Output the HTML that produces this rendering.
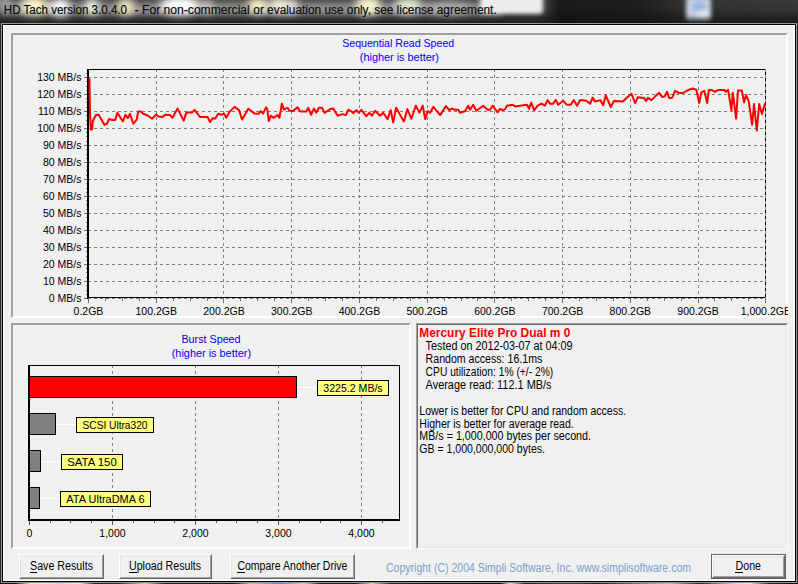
<!DOCTYPE html>
<html><head><meta charset="utf-8"><style>
html,body{margin:0;padding:0;}
body{width:798px;height:584px;overflow:hidden;position:relative;background:#1e1e1e;font-family:'Liberation Sans', sans-serif;}
svg text{font-family:'Liberation Sans', sans-serif;}
.t{font-size:10.5px;fill:#000;}
.b{fill:#0000ff;font-size:10.8px}
.m{font-size:12px;fill:#000;}
.lb{font-size:11px;fill:#000;}
.cp{fill:#7c9fcc;}
.bold{font-size:12px;font-weight:bold;fill:#ff0000;}
</style></head><body>
<svg width="798" height="23" style="position:absolute;left:0;top:0">
<defs>
<filter id="bl" x="-50%" y="-50%" width="200%" height="200%"><feGaussianBlur stdDeviation="4"/></filter>
<filter id="bl3" x="-50%" y="-50%" width="200%" height="200%"><feGaussianBlur stdDeviation="2.2"/></filter>
<filter id="bl2" x="-20%" y="-100%" width="140%" height="300%"><feGaussianBlur stdDeviation="3"/></filter>
<linearGradient id="tbv" x1="0" y1="0" x2="0" y2="1">
<stop offset="0" stop-color="#444"/><stop offset="0.45" stop-color="#3e3e3e"/><stop offset="0.8" stop-color="#2a2a2a"/><stop offset="1" stop-color="#222"/>
</linearGradient>
<linearGradient id="tbh" x1="0" y1="0" x2="1" y2="0">
<stop offset="0" stop-color="#000" stop-opacity="0"/>
<stop offset="0.68" stop-color="#000" stop-opacity="0"/>
<stop offset="0.70" stop-color="#000" stop-opacity="0.6"/>
<stop offset="0.80" stop-color="#000" stop-opacity="0.55"/>
<stop offset="0.86" stop-color="#000" stop-opacity="0.25"/>
<stop offset="1" stop-color="#000" stop-opacity="0.15"/>
</linearGradient>
</defs>
<rect width="798" height="23" fill="url(#tbv)"/>
<rect width="798" height="23" fill="url(#tbh)"/>
<rect x="0" y="3" width="502" height="13" fill="#fff" opacity="0.42" filter="url(#bl2)"/>
<g filter="url(#bl)"><ellipse cx="4" cy="2" rx="8" ry="5" fill="#c0c0c0" opacity="0.9"/><ellipse cx="34" cy="6" rx="14" ry="10" fill="#fbf3c8" opacity="1"/><ellipse cx="60" cy="8" rx="10" ry="10" fill="#ffffff" opacity="1"/><ellipse cx="92" cy="7" rx="7" ry="9" fill="#f4f4ec" opacity="1"/><ellipse cx="126" cy="7" rx="8" ry="9" fill="#f4ecc0" opacity="1"/><ellipse cx="180" cy="6" rx="20" ry="10" fill="#ffffff" opacity="1"/><ellipse cx="207" cy="7" rx="5" ry="8" fill="#e0e0e0" opacity="0.9"/><ellipse cx="258" cy="6" rx="10" ry="9" fill="#faf2c8" opacity="1"/><ellipse cx="290" cy="7" rx="8" ry="8" fill="#f0f0e8" opacity="1"/><ellipse cx="368" cy="6" rx="13" ry="10" fill="#faf6d0" opacity="1"/><ellipse cx="408" cy="6" rx="14" ry="9" fill="#e0e8d0" opacity="1"/><ellipse cx="448" cy="9" rx="22" ry="7" fill="#b8b8b8" opacity="0.8"/><ellipse cx="278" cy="6" rx="8" ry="9" fill="#f8f4d8" opacity="1"/></g><g filter="url(#bl3)"><rect x="480" y="-4" width="63" height="18" rx="4" fill="#eeeeee"/><rect x="686" y="-3" width="25" height="23" rx="3" fill="#c8d4e4"/><ellipse cx="699" cy="7" rx="7" ry="6" fill="#9ab8e0"/><ellipse cx="703" cy="15" rx="7" ry="4" fill="#eef0f4"/></g>
<rect x="0" y="18" width="798" height="5" fill="#202020" opacity="0.55" filter="url(#bl2)"/>
</svg>
<svg width="798" height="23" style="position:absolute;left:0;top:0"><g style="font-family:'Liberation Sans',sans-serif;font-size:12px;fill:#0a0a0a;stroke:#0a0a0a;stroke-width:0.2px"><text x="3.8" y="14" textLength="123.2" lengthAdjust="spacingAndGlyphs">HD Tach version 3.0.4.0</text><text x="134.6" y="14" textLength="115.2" lengthAdjust="spacingAndGlyphs">- For non-commercial</text><text x="253.3" y="14" textLength="243.4" lengthAdjust="spacingAndGlyphs">or evaluation use only, see license agreement.</text></g></svg>
<div style="position:absolute;left:0px;top:23px;width:798px;height:561px;background:#2a2a2a"></div>
<div style="position:absolute;left:1px;top:23px;width:796px;height:560px;background:#969696"></div>
<div style="position:absolute;left:2px;top:24px;width:794px;height:558px;background:#000"></div>
<div style="position:absolute;left:0;top:583px;width:798px;height:1px;background:linear-gradient(to right,#111 0px,#111 15px,#e8e0b0 30px,#f0ecd0 40px,#c8d4e8 60px,#e8eef4 80px,#222 95px,#333 120px,#d8d0a8 145px,#222 165px,#222 235px,#c8c0a0 250px,#6080c0 280px,#d0d0d0 305px,#222 320px,#222 355px,#e0dcc0 372px,#222 390px,#111 500px,#e0e0e0 510px,#222 525px,#444 570px,#222 600px,#bbb 670px,#222 700px,#c8d8f0 735px,#e0e8f0 750px,#222 770px,#111 798px)"></div>
<div style="position:absolute;left:3px;top:25px;width:792px;height:556px;background:#fff"></div>
<div style="position:absolute;left:4px;top:26px;width:790px;height:554px;background:#f0f0f0"></div>
<div style="position:absolute;left:11px;top:33px;width:773px;height:281px;border-style:solid;border-width:2px;border-color:#a0a0a0 #fff #fff #a0a0a0"></div>
<div style="position:absolute;left:11px;top:323px;width:396px;height:222px;border-style:solid;border-width:2px;border-color:#a0a0a0 #fff #fff #a0a0a0"></div>
<div style="position:absolute;left:416px;top:323px;width:370px;height:224px;border-style:solid;border-width:1px;border-color:#a0a0a0 #fff #fff #a0a0a0"></div>
<div style="position:absolute;left:417px;top:324px;width:368px;height:222px;border-style:solid;border-width:1px;border-color:#696969 #e3e3e3 #e3e3e3 #696969"></div>
<div style="position:absolute;left:19px;top:554px;width:83px;height:23px;border-style:solid;border-width:1px;border-color:#fff #696969 #696969 #fff"></div><div style="position:absolute;left:20px;top:555px;width:81px;height:21px;border-style:solid;border-width:1px;border-color:#e3e3e3 #a0a0a0 #a0a0a0 #e3e3e3"></div>
<div style="position:absolute;left:119px;top:554px;width:91px;height:23px;border-style:solid;border-width:1px;border-color:#fff #696969 #696969 #fff"></div><div style="position:absolute;left:120px;top:555px;width:89px;height:21px;border-style:solid;border-width:1px;border-color:#e3e3e3 #a0a0a0 #a0a0a0 #e3e3e3"></div>
<div style="position:absolute;left:230px;top:554px;width:123px;height:23px;border-style:solid;border-width:1px;border-color:#fff #696969 #696969 #fff"></div><div style="position:absolute;left:231px;top:555px;width:121px;height:21px;border-style:solid;border-width:1px;border-color:#e3e3e3 #a0a0a0 #a0a0a0 #e3e3e3"></div>
<div style="position:absolute;left:711px;top:554px;width:73px;height:23px;border-style:solid;border-width:1px;border-color:#646464 #646464 #646464 #646464"></div><div style="position:absolute;left:712px;top:555px;width:71px;height:21px;border-style:solid;border-width:1px;border-color:#fff #696969 #696969 #fff"></div><div style="position:absolute;left:713px;top:556px;width:69px;height:19px;border-style:solid;border-width:1px;border-color:#e3e3e3 #a0a0a0 #a0a0a0 #e3e3e3"></div>
<svg width="798" height="584" style="position:absolute;left:0;top:0">
<defs><clipPath id="c1"><rect x="4" y="26" width="784" height="554"/></clipPath></defs>
<g clip-path="url(#c1)">
<line x1="88" y1="77.5" x2="765" y2="77.5" stroke="#808080" stroke-width="1" stroke-dasharray="3 3"/>
<line x1="88" y1="94.5" x2="765" y2="94.5" stroke="#808080" stroke-width="1" stroke-dasharray="3 3"/>
<line x1="88" y1="111.5" x2="765" y2="111.5" stroke="#808080" stroke-width="1" stroke-dasharray="3 3"/>
<line x1="88" y1="128.5" x2="765" y2="128.5" stroke="#808080" stroke-width="1" stroke-dasharray="3 3"/>
<line x1="88" y1="145.5" x2="765" y2="145.5" stroke="#808080" stroke-width="1" stroke-dasharray="3 3"/>
<line x1="88" y1="162.5" x2="765" y2="162.5" stroke="#808080" stroke-width="1" stroke-dasharray="3 3"/>
<line x1="88" y1="179.5" x2="765" y2="179.5" stroke="#808080" stroke-width="1" stroke-dasharray="3 3"/>
<line x1="88" y1="196.5" x2="765" y2="196.5" stroke="#808080" stroke-width="1" stroke-dasharray="3 3"/>
<line x1="88" y1="213.5" x2="765" y2="213.5" stroke="#808080" stroke-width="1" stroke-dasharray="3 3"/>
<line x1="88" y1="230.5" x2="765" y2="230.5" stroke="#808080" stroke-width="1" stroke-dasharray="3 3"/>
<line x1="88" y1="247.5" x2="765" y2="247.5" stroke="#808080" stroke-width="1" stroke-dasharray="3 3"/>
<line x1="88" y1="264.5" x2="765" y2="264.5" stroke="#808080" stroke-width="1" stroke-dasharray="3 3"/>
<line x1="88" y1="281.5" x2="765" y2="281.5" stroke="#808080" stroke-width="1" stroke-dasharray="3 3"/>
<line x1="88" y1="298.5" x2="765" y2="298.5" stroke="#808080" stroke-width="1" stroke-dasharray="3 3"/>
<line x1="156.5" y1="69" x2="156.5" y2="297" stroke="#808080" stroke-width="1" stroke-dasharray="3 3"/>
<line x1="223.5" y1="69" x2="223.5" y2="297" stroke="#808080" stroke-width="1" stroke-dasharray="3 3"/>
<line x1="291.5" y1="69" x2="291.5" y2="297" stroke="#808080" stroke-width="1" stroke-dasharray="3 3"/>
<line x1="359.5" y1="69" x2="359.5" y2="297" stroke="#808080" stroke-width="1" stroke-dasharray="3 3"/>
<line x1="427.5" y1="69" x2="427.5" y2="297" stroke="#808080" stroke-width="1" stroke-dasharray="3 3"/>
<line x1="494.5" y1="69" x2="494.5" y2="297" stroke="#808080" stroke-width="1" stroke-dasharray="3 3"/>
<line x1="562.5" y1="69" x2="562.5" y2="297" stroke="#808080" stroke-width="1" stroke-dasharray="3 3"/>
<line x1="630.5" y1="69" x2="630.5" y2="297" stroke="#808080" stroke-width="1" stroke-dasharray="3 3"/>
<line x1="698.5" y1="69" x2="698.5" y2="297" stroke="#808080" stroke-width="1" stroke-dasharray="3 3"/>
<line x1="765.5" y1="69" x2="765.5" y2="297" stroke="#808080" stroke-width="1" stroke-dasharray="3 3"/>
<rect x="87" y="69" width="2" height="230" fill="#000"/>
<rect x="87" y="69" width="679" height="1" fill="#000"/>
<rect x="87" y="297" width="679" height="1" fill="#000"/>
<rect x="765" y="69" width="1" height="230" fill="#909090"/>
<line x1="765.5" y1="72" x2="765.5" y2="297" stroke="#000" stroke-width="1" stroke-dasharray="3 3"/>
<rect x="88" y="298" width="1" height="5" fill="#707070"/>
<rect x="105" y="298" width="1" height="3" fill="#707070"/>
<rect x="122" y="298" width="1" height="3" fill="#707070"/>
<rect x="139" y="298" width="1" height="3" fill="#707070"/>
<rect x="156" y="298" width="1" height="5" fill="#707070"/>
<rect x="173" y="298" width="1" height="3" fill="#707070"/>
<rect x="190" y="298" width="1" height="3" fill="#707070"/>
<rect x="207" y="298" width="1" height="3" fill="#707070"/>
<rect x="223" y="298" width="1" height="5" fill="#707070"/>
<rect x="240" y="298" width="1" height="3" fill="#707070"/>
<rect x="257" y="298" width="1" height="3" fill="#707070"/>
<rect x="274" y="298" width="1" height="3" fill="#707070"/>
<rect x="291" y="298" width="1" height="5" fill="#707070"/>
<rect x="308" y="298" width="1" height="3" fill="#707070"/>
<rect x="325" y="298" width="1" height="3" fill="#707070"/>
<rect x="342" y="298" width="1" height="3" fill="#707070"/>
<rect x="359" y="298" width="1" height="5" fill="#707070"/>
<rect x="376" y="298" width="1" height="3" fill="#707070"/>
<rect x="393" y="298" width="1" height="3" fill="#707070"/>
<rect x="410" y="298" width="1" height="3" fill="#707070"/>
<rect x="427" y="298" width="1" height="5" fill="#707070"/>
<rect x="444" y="298" width="1" height="3" fill="#707070"/>
<rect x="461" y="298" width="1" height="3" fill="#707070"/>
<rect x="477" y="298" width="1" height="3" fill="#707070"/>
<rect x="494" y="298" width="1" height="5" fill="#707070"/>
<rect x="511" y="298" width="1" height="3" fill="#707070"/>
<rect x="528" y="298" width="1" height="3" fill="#707070"/>
<rect x="545" y="298" width="1" height="3" fill="#707070"/>
<rect x="562" y="298" width="1" height="5" fill="#707070"/>
<rect x="579" y="298" width="1" height="3" fill="#707070"/>
<rect x="596" y="298" width="1" height="3" fill="#707070"/>
<rect x="613" y="298" width="1" height="3" fill="#707070"/>
<rect x="630" y="298" width="1" height="5" fill="#707070"/>
<rect x="647" y="298" width="1" height="3" fill="#707070"/>
<rect x="664" y="298" width="1" height="3" fill="#707070"/>
<rect x="681" y="298" width="1" height="3" fill="#707070"/>
<rect x="698" y="298" width="1" height="5" fill="#707070"/>
<rect x="714" y="298" width="1" height="3" fill="#707070"/>
<rect x="731" y="298" width="1" height="3" fill="#707070"/>
<rect x="748" y="298" width="1" height="3" fill="#707070"/>
<rect x="765" y="298" width="1" height="5" fill="#707070"/>
<rect x="84" y="77.0" width="3" height="1" fill="#707070"/>
<rect x="86" y="81" width="1" height="1" fill="#777"/>
<rect x="86" y="86" width="1" height="1" fill="#777"/>
<rect x="86" y="90" width="1" height="1" fill="#777"/>
<rect x="84" y="94.0" width="3" height="1" fill="#707070"/>
<rect x="86" y="98" width="1" height="1" fill="#777"/>
<rect x="86" y="102" width="1" height="1" fill="#777"/>
<rect x="86" y="107" width="1" height="1" fill="#777"/>
<rect x="84" y="111.0" width="3" height="1" fill="#707070"/>
<rect x="86" y="115" width="1" height="1" fill="#777"/>
<rect x="86" y="120" width="1" height="1" fill="#777"/>
<rect x="86" y="124" width="1" height="1" fill="#777"/>
<rect x="84" y="128.0" width="3" height="1" fill="#707070"/>
<rect x="86" y="132" width="1" height="1" fill="#777"/>
<rect x="86" y="136" width="1" height="1" fill="#777"/>
<rect x="86" y="141" width="1" height="1" fill="#777"/>
<rect x="84" y="145.0" width="3" height="1" fill="#707070"/>
<rect x="86" y="149" width="1" height="1" fill="#777"/>
<rect x="86" y="154" width="1" height="1" fill="#777"/>
<rect x="86" y="158" width="1" height="1" fill="#777"/>
<rect x="84" y="162.0" width="3" height="1" fill="#707070"/>
<rect x="86" y="166" width="1" height="1" fill="#777"/>
<rect x="86" y="170" width="1" height="1" fill="#777"/>
<rect x="86" y="175" width="1" height="1" fill="#777"/>
<rect x="84" y="179.0" width="3" height="1" fill="#707070"/>
<rect x="86" y="183" width="1" height="1" fill="#777"/>
<rect x="86" y="188" width="1" height="1" fill="#777"/>
<rect x="86" y="192" width="1" height="1" fill="#777"/>
<rect x="84" y="196.0" width="3" height="1" fill="#707070"/>
<rect x="86" y="200" width="1" height="1" fill="#777"/>
<rect x="86" y="204" width="1" height="1" fill="#777"/>
<rect x="86" y="209" width="1" height="1" fill="#777"/>
<rect x="84" y="213.0" width="3" height="1" fill="#707070"/>
<rect x="86" y="217" width="1" height="1" fill="#777"/>
<rect x="86" y="222" width="1" height="1" fill="#777"/>
<rect x="86" y="226" width="1" height="1" fill="#777"/>
<rect x="84" y="230.0" width="3" height="1" fill="#707070"/>
<rect x="86" y="234" width="1" height="1" fill="#777"/>
<rect x="86" y="238" width="1" height="1" fill="#777"/>
<rect x="86" y="243" width="1" height="1" fill="#777"/>
<rect x="84" y="247.0" width="3" height="1" fill="#707070"/>
<rect x="86" y="251" width="1" height="1" fill="#777"/>
<rect x="86" y="256" width="1" height="1" fill="#777"/>
<rect x="86" y="260" width="1" height="1" fill="#777"/>
<rect x="84" y="264.0" width="3" height="1" fill="#707070"/>
<rect x="86" y="268" width="1" height="1" fill="#777"/>
<rect x="86" y="272" width="1" height="1" fill="#777"/>
<rect x="86" y="277" width="1" height="1" fill="#777"/>
<rect x="84" y="281.0" width="3" height="1" fill="#707070"/>
<rect x="86" y="285" width="1" height="1" fill="#777"/>
<rect x="86" y="290" width="1" height="1" fill="#777"/>
<rect x="86" y="294" width="1" height="1" fill="#777"/>
<rect x="86" y="73" width="1" height="1" fill="#777"/>
<rect x="84" y="298" width="3" height="1" fill="#707070"/>
<text x="81.5" y="81" text-anchor="end" class="t">130 MB/s</text>
<text x="81.5" y="98" text-anchor="end" class="t">120 MB/s</text>
<text x="81.5" y="115" text-anchor="end" class="t">110 MB/s</text>
<text x="81.5" y="132" text-anchor="end" class="t">100 MB/s</text>
<text x="81.5" y="149" text-anchor="end" class="t">90 MB/s</text>
<text x="81.5" y="166" text-anchor="end" class="t">80 MB/s</text>
<text x="81.5" y="183" text-anchor="end" class="t">70 MB/s</text>
<text x="81.5" y="200" text-anchor="end" class="t">60 MB/s</text>
<text x="81.5" y="217" text-anchor="end" class="t">50 MB/s</text>
<text x="81.5" y="234" text-anchor="end" class="t">40 MB/s</text>
<text x="81.5" y="251" text-anchor="end" class="t">30 MB/s</text>
<text x="81.5" y="268" text-anchor="end" class="t">20 MB/s</text>
<text x="81.5" y="285" text-anchor="end" class="t">10 MB/s</text>
<text x="81.5" y="302" text-anchor="end" class="t">0 MB/s</text>
<text x="88.5" y="315" text-anchor="middle" class="t">0.2GB</text>
<text x="156.23000000000002" y="315" text-anchor="middle" class="t">100.2GB</text>
<text x="223.96" y="315" text-anchor="middle" class="t">200.2GB</text>
<text x="291.69" y="315" text-anchor="middle" class="t">300.2GB</text>
<text x="359.42" y="315" text-anchor="middle" class="t">400.2GB</text>
<text x="427.15000000000003" y="315" text-anchor="middle" class="t">500.2GB</text>
<text x="494.88" y="315" text-anchor="middle" class="t">600.2GB</text>
<text x="562.61" y="315" text-anchor="middle" class="t">700.2GB</text>
<text x="630.34" y="315" text-anchor="middle" class="t">800.2GB</text>
<text x="698.07" y="315" text-anchor="middle" class="t">900.2GB</text>
<text x="765.8000000000001" y="315" text-anchor="middle" class="t">1,000.2GB</text>
<text x="398.2" y="47" text-anchor="middle" class="t b" textLength="112" lengthAdjust="spacingAndGlyphs">Sequential Read Speed</text>
<text x="399.4" y="61" text-anchor="middle" class="t b" textLength="79.2" lengthAdjust="spacingAndGlyphs">(higher is better)</text>
<polyline points="89.5,79.3 89.7,96.3 90,112.7 90.8,129.7 92.2,129.2 92.8,121 96,115 98.8,114.7 104.3,124.8 107,123.7 109.2,118.8 111.4,119.9 115.2,119.9 117.4,112.7 122.9,121.5 125.4,114.9 127.8,118.2 130,113.8 133.3,123.7 136.6,119.9 138.2,111.6 141,111.6 143.2,113.8 147.6,115.5 152,118.8 156.3,114.4 158.5,116.6 162.5,117 165,114.8 170,115 172.5,117.8 177.5,108.6 183.8,120.7 186.3,112.6 192,112.6 194.5,109.8 200,117 207.6,117 210.1,122 212.6,118.2 215.1,118.6 218.3,113.8 221.4,114.8 223.9,113.6 226.2,117.8 229.5,111.9 234.6,106.9 239,110 242.1,119.5 248.3,108.8 254.6,113.6 258.8,113.8 260.6,111.1 263.1,113.6 266,107.3 267.3,109.4 268.8,121.1 270.7,115.7 273.8,117.8 277.6,115.1 279.4,117.8 281.9,103.8 283.8,109.4 287.6,107.8 289.5,110.7 292.6,111.1 297.6,107.3 300.1,111.6 306.4,111.6 308.3,107.8 311.1,114.8 313.9,108.6 316.4,112.6 318.9,107.8 322,107.8 324.5,112.8 330.2,109.1 333.3,108.6 337.7,115.7 342.7,114.1 345.9,115.1 348.4,109.8 351.5,111.3 353.1,113.2 356.3,110.1 358.8,112.8 361.3,109.8 366.3,116.1 369.4,112.8 371.9,115.7 375.1,110.7 380.1,115.7 383.2,112.8 387.6,119.1 390.7,110.1 393.2,122.6 396.1,107.8 403.9,121.4 407.4,109.1 411.4,118.8 415.8,105.7 419.5,112.6 422.7,105.7 425.2,119.1 427.7,111.1 430.2,112.8 433.3,106.9 440.2,115.1 445.9,106.1 449.4,110.1 451.9,108.6 455,109.8 458.2,109.8 460,112.8 465,111.3 468.2,105.7 470.1,109.8 473.2,104.8 476.3,110.7 483.2,105.7 487.6,109.8 490.1,109.8 492.6,105.7 497.6,112.3 500.1,108.8 502.6,110.1 504.9,109.4 507,105.7 512.7,104.8 515.8,106.6 520.2,105.7 527.1,104.8 529,108.8 531.2,102.6 534.2,110.1 537.7,105.7 541.5,103.6 545,105.7 547.5,100.1 550,103.8 553.2,103.8 555.7,99.8 558.2,104.8 563.2,100.7 566.3,104.4 570.7,104.8 573.8,100.1 577,105.7 580.1,100.1 586.4,100.7 590.1,103.8 592.6,97.6 595.1,101.6 600.2,100.1 603.3,105.1 605.8,95.3 610.8,107 613.9,101.1 622.7,101.6 627.7,96.9 631.5,93.8 635.2,103.2 637.7,97.3 644,97.9 646,100.9 648,97.9 651.5,100.1 655,96.6 659.1,92.8 662.1,96.9 664.6,96.6 667.1,91.8 669.1,97.9 672.1,97.9 675.1,90.8 679.1,93 683.1,93 687.1,90.5 692.6,88.5 696.4,89.8 699.2,103.1 701.2,92.5 704.2,90.8 707.2,103.1 708.8,89.9 711.6,89.9 714.9,91.8 718.2,89.9 724.3,89.9 725.7,91.8 728.1,89.9 731.4,110.2 732.8,92.7 736.1,118.6 738,90.4 741.8,90.4 744.1,102.6 746,94.9 748.8,101.7 752.1,124.8 754,104 756.8,130.4 759.2,104 762,113.9 764.8,104" fill="none" stroke="#ff0000" stroke-width="2" stroke-linejoin="round" stroke-linecap="round"/>
<text x="211" y="343" text-anchor="middle" class="t b" textLength="59.2" lengthAdjust="spacingAndGlyphs">Burst Speed</text>
<text x="211.4" y="357" text-anchor="middle" class="t b" textLength="79.3" lengthAdjust="spacingAndGlyphs">(higher is better)</text>
<line x1="112.5" y1="365" x2="112.5" y2="519" stroke="#808080" stroke-width="1" stroke-dasharray="3 3"/>
<line x1="195.5" y1="365" x2="195.5" y2="519" stroke="#808080" stroke-width="1" stroke-dasharray="3 3"/>
<line x1="278.5" y1="365" x2="278.5" y2="519" stroke="#808080" stroke-width="1" stroke-dasharray="3 3"/>
<line x1="361.5" y1="365" x2="361.5" y2="519" stroke="#808080" stroke-width="1" stroke-dasharray="3 3"/>
<rect x="28.5" y="365.5" width="371" height="154" fill="none" stroke="#000" stroke-width="1"/>
<rect x="28" y="365" width="2" height="156" fill="#000"/>
<rect x="28" y="519" width="372" height="2" fill="#000"/>
<rect x="29" y="521" width="1" height="4" fill="#555"/>
<rect x="50" y="521" width="1" height="2" fill="#555"/>
<rect x="70" y="521" width="1" height="2" fill="#555"/>
<rect x="91" y="521" width="1" height="2" fill="#555"/>
<rect x="112" y="521" width="1" height="4" fill="#555"/>
<rect x="133" y="521" width="1" height="2" fill="#555"/>
<rect x="154" y="521" width="1" height="2" fill="#555"/>
<rect x="174" y="521" width="1" height="2" fill="#555"/>
<rect x="195" y="521" width="1" height="4" fill="#555"/>
<rect x="216" y="521" width="1" height="2" fill="#555"/>
<rect x="236" y="521" width="1" height="2" fill="#555"/>
<rect x="257" y="521" width="1" height="2" fill="#555"/>
<rect x="278" y="521" width="1" height="4" fill="#555"/>
<rect x="299" y="521" width="1" height="2" fill="#555"/>
<rect x="320" y="521" width="1" height="2" fill="#555"/>
<rect x="340" y="521" width="1" height="2" fill="#555"/>
<rect x="361" y="521" width="1" height="4" fill="#555"/>
<rect x="382" y="521" width="1" height="2" fill="#555"/>
<text x="29.5" y="537" text-anchor="middle" class="t">0</text>
<text x="112.5" y="537" text-anchor="middle" class="t">1,000</text>
<text x="195.5" y="537" text-anchor="middle" class="t">2,000</text>
<text x="278.5" y="537" text-anchor="middle" class="t">3,000</text>
<text x="361.5" y="537" text-anchor="middle" class="t">4,000</text>
<line x1="297" y1="387.5" x2="317" y2="387.5" stroke="#fff" stroke-width="1"/>
<rect x="29.5" y="376.5" width="267" height="21" fill="#ff0000" stroke="#000" stroke-width="1"/>
<rect x="317.5" y="380.5" width="71" height="15" fill="#ffff80" stroke="#000" stroke-width="1"/><text x="353.0" y="391.6" text-anchor="middle" class="lb" textLength="59.3" lengthAdjust="spacingAndGlyphs">3225.2 MB/s</text>
<line x1="56" y1="424.5" x2="76" y2="424.5" stroke="#fff" stroke-width="1"/>
<rect x="29.5" y="413.5" width="26" height="21" fill="#808080" stroke="#000" stroke-width="1"/>
<rect x="76.5" y="417.5" width="77" height="15" fill="#ffff80" stroke="#000" stroke-width="1"/><text x="115.0" y="428.6" text-anchor="middle" class="lb" textLength="65" lengthAdjust="spacingAndGlyphs">SCSI Ultra320</text>
<line x1="41" y1="461.5" x2="61" y2="461.5" stroke="#fff" stroke-width="1"/>
<rect x="29.5" y="450.5" width="11" height="21" fill="#808080" stroke="#000" stroke-width="1"/>
<rect x="61.5" y="454.5" width="61" height="15" fill="#ffff80" stroke="#000" stroke-width="1"/><text x="92.0" y="465.6" text-anchor="middle" class="lb" textLength="49.6" lengthAdjust="spacingAndGlyphs">SATA 150</text>
<line x1="40" y1="498.5" x2="60" y2="498.5" stroke="#fff" stroke-width="1"/>
<rect x="29.5" y="487.5" width="10" height="21" fill="#808080" stroke="#000" stroke-width="1"/>
<rect x="60.5" y="491.5" width="90" height="15" fill="#ffff80" stroke="#000" stroke-width="1"/><text x="105.5" y="502.6" text-anchor="middle" class="lb" textLength="78.3" lengthAdjust="spacingAndGlyphs">ATA UltraDMA 6</text>
<text x="419.3" y="337" class="bold" textLength="151" lengthAdjust="spacingAndGlyphs">Mercury Elite Pro Dual m 0</text>
<text x="425.6" y="350" class="m" textLength="147" lengthAdjust="spacingAndGlyphs">Tested on 2012-03-07 at 04:09</text>
<text x="425.6" y="363" class="m" textLength="116.7" lengthAdjust="spacingAndGlyphs">Random access: 16.1ms</text>
<text x="425.6" y="376" class="m" textLength="127.7" lengthAdjust="spacingAndGlyphs">CPU utilization: 1% (+/- 2%)</text>
<text x="425.6" y="389" class="m" textLength="126" lengthAdjust="spacingAndGlyphs">Average read: 112.1 MB/s</text>
<text x="419.3" y="415.0" class="m" textLength="206.8" lengthAdjust="spacingAndGlyphs">Lower is better for CPU and random access.</text>
<text x="419.3" y="427.7" class="m" textLength="154.4" lengthAdjust="spacingAndGlyphs">Higher is better for average read.</text>
<text x="419.3" y="440.4" class="m" textLength="171.7" lengthAdjust="spacingAndGlyphs">MB/s = 1,000,000 bytes per second.</text>
<text x="419.3" y="453.1" class="m" textLength="125.7" lengthAdjust="spacingAndGlyphs">GB = 1,000,000,000 bytes.</text>
<text x="30" y="570" class="m" textLength="63" lengthAdjust="spacingAndGlyphs">Save Results</text><rect x="30" y="572" width="7" height="1" fill="#000"/>
<text x="129" y="570" class="m" textLength="72" lengthAdjust="spacingAndGlyphs">Upload Results</text><rect x="129" y="572" width="8" height="1" fill="#000"/>
<text x="237.4" y="570" class="m" textLength="110" lengthAdjust="spacingAndGlyphs">Compare Another Drive</text><rect x="237" y="572" width="8" height="1" fill="#000"/>
<text x="735.6" y="570" class="m" textLength="25.4" lengthAdjust="spacingAndGlyphs">Done</text><rect x="735" y="572" width="8" height="1" fill="#000"/>
<text x="386" y="572" class="m cp" textLength="305" lengthAdjust="spacingAndGlyphs">Copyright (C) 2004 Simpli Software, Inc. www.simplisoftware.com</text>
</g>
</svg>
</body></html>
